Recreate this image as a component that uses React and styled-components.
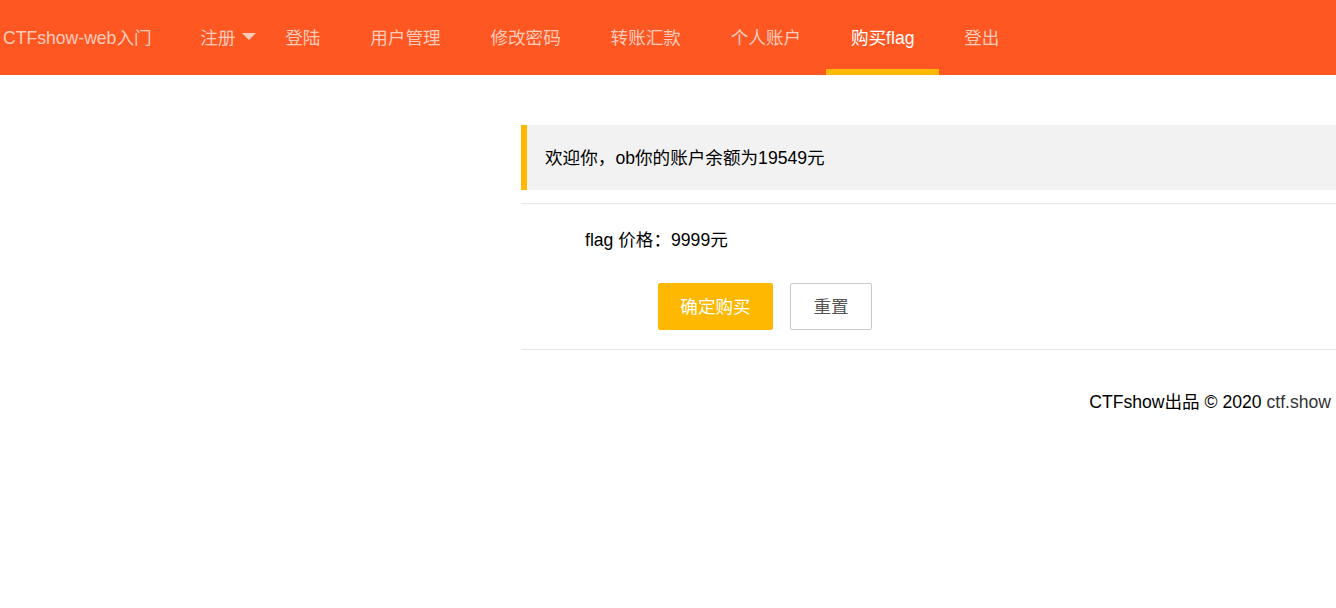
import React from "react";
import styled, { createGlobalStyle } from "styled-components";

const Global = createGlobalStyle`
  html, body { margin: 0; padding: 0; background: #fff; }
  body { font-family: "Liberation Sans", "Noto Sans CJK SC", sans-serif; color: #000; font-size: 17.6px; }
`;

const Header = styled.div`
  height: 75px;
  background: #ff5722;
  display: flex;
  align-items: stretch;
`;

const Logo = styled.div`
  width: 175.25px;
  padding: 0 0 2px 3px;
  box-sizing: border-box;
  display: flex;
  align-items: center;
  color: rgba(255, 255, 255, 0.7);
  white-space: nowrap;
`;

const NavItem = styled.div`
  position: relative;
  padding: 0 ${(p) => (p.$more ? "4px" : "24.9px")} 2px 24.9px;
  box-sizing: border-box;
  color: ${(p) => (p.$active ? "#fff" : "rgba(255,255,255,0.7)")};
  white-space: nowrap;
  display: flex;
  align-items: center;
  &::after {
    content: "";
    display: ${(p) => (p.$active ? "block" : "none")};
    position: absolute;
    left: 0;
    right: 0;
    bottom: 0;
    height: 6px;
    background: #ffb800;
  }
`;

const Caret = styled.span`
  display: inline-block;
  width: 0;
  height: 0;
  margin-left: 7px;
  border-left: 7px solid transparent;
  border-right: 7px solid transparent;
  border-top: 7px solid rgba(255, 255, 255, 0.7);
  margin-top: -1px;
`;

const Main = styled.div`
  padding-left: 521px;
`;

const Quote = styled.div`
  margin-top: 50px;
  background: #f2f2f2;
  border-left: 6px solid #ffb800;
  padding: 16px 18px 14px;
  line-height: 35px;
`;

const Rule = styled.div`
  height: 1px;
  background: #e6e6e6;
  margin-top: ${(p) => p.$top}px;
`;

const Price = styled.div`
  margin-top: 17px;
  padding-left: 64px;
  line-height: 38px;
`;

const Buttons = styled.div`
  margin-top: 24px;
  padding-left: 137px;
  display: flex;
  gap: 17px;
`;

const Button = styled.button`
  height: 47px;
  width: ${(p) => (p.$primary ? "115px" : "82px")};
  padding: 0 0 2px;
  box-sizing: border-box;
  border-radius: 2px;
  font-family: inherit;
  font-size: 17.6px;
  white-space: nowrap;
  cursor: pointer;
  background: ${(p) => (p.$primary ? "#ffb800" : "#fff")};
  color: ${(p) => (p.$primary ? "#fff" : "#555")};
  border: 1px solid ${(p) => (p.$primary ? "#ffb800" : "#c9c9c9")};
`;

const Footer = styled.div`
  margin-top: 42px;
  text-align: right;
  padding-right: 5px;
  line-height: 20px;
  color: #000;
`;

const Link = styled.a`
  color: #333;
  text-decoration: none;
`;

const navs = ["登陆", "用户管理", "修改密码", "转账汇款", "个人账户", "购买flag", "登出"];

export default function App() {
  return (
    <>
      <Global />
      <Header>
        <Logo>CTFshow-web入门</Logo>
        <NavItem $more>
          注册
          <Caret />
        </NavItem>
        {navs.map((n) => (
          <NavItem key={n} $active={n === "购买flag"}>
            {n}
          </NavItem>
        ))}
      </Header>
      <Main>
        <Quote>欢迎你，ob你的账户余额为19549元</Quote>
        <Rule $top={13} />
        <Price>flag 价格：9999元</Price>
        <Buttons>
          <Button $primary>确定购买</Button>
          <Button>重置</Button>
        </Buttons>
        <Rule $top={19} />
      </Main>
      <Footer>
        CTFshow出品 © 2020 <Link href="#">ctf.show</Link>
      </Footer>
    </>
  );
}
